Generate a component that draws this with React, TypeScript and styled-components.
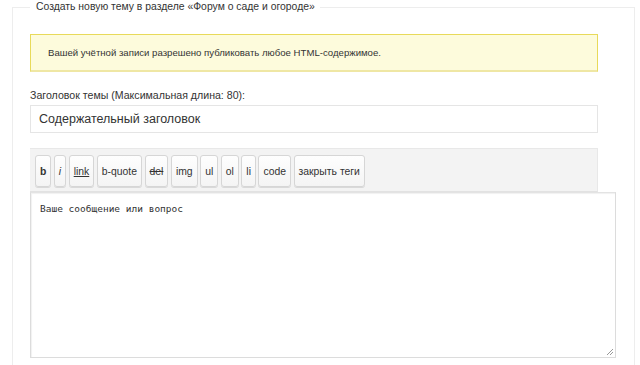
import React from "react";
import styled, { createGlobalStyle } from "styled-components";

const Global = createGlobalStyle`
  html, body { margin: 0; padding: 0; background: #fff; }
  body { font-family: "Liberation Sans", Arial, sans-serif; color: #333; }
  * { box-sizing: border-box; }
`;

const Page = styled.div`
  padding: 0 0 0 12px;
`;

const Fieldset = styled.fieldset`
  width: 604px;
  margin: 0;
  padding: 8px 18px 20px 17px;
  border: 1px solid #ededed;
  border-bottom: none;
`;

const Legend = styled.legend`
  padding: 0 5px 0 6px;
  font-size: 10.4px;
  line-height: 14px;
  color: #333;
`;

const Notice = styled.div`
  width: 568px;
  height: 38px;
  display: flex;
  align-items: center;
  padding: 0 0 0 17px;
  margin-top: 12px;
  background: #fdfbdc;
  border: 1px solid #e8da5a;
  border-bottom: 2px solid #efe7a4;
  font-size: 9.6px;
  color: #333;
`;

const Label = styled.label`
  display: block;
  margin-top: 17px;
  font-size: 10.6px;
  line-height: 12px;
  color: #333;
`;

const TitleInput = styled.div`
  width: 568px;
  height: 28px;
  margin-top: 4px;
  display: flex;
  align-items: center;
  padding: 0 8px;
  border: 1px solid #e5e5e5;
  font-size: 12.5px;
  color: #333;
`;

const Toolbar = styled.div`
  width: 568px;
  height: 44px;
  margin-top: 15px;
  display: flex;
  align-items: flex-start;
  gap: 2.5px;
  padding: 6px 0 0 5px;
  background: #f3f3f3;
  border: 1px solid #e8e8e8;
  border-left: none;
  border-bottom-color: #e2e2e2;
`;

const TagButton = styled.button<{ $kind?: "b" | "i" | "link" | "del" }>`
  height: 32px;
  padding: 0 4px;
  margin: 0;
  border: 1px solid #d6d6d6;
  border-radius: 3px;
  background: linear-gradient(#fefefe, #f4f4f4);
  box-shadow: 0 1px 0 #d9d9d9;
  font-family: "Liberation Sans", Arial, sans-serif;
  font-size: 10.4px;
  color: #333;
  font-weight: ${(p) => (p.$kind === "b" ? "bold" : "normal")};
  font-style: ${(p) => (p.$kind === "i" ? "italic" : "normal")};
  text-decoration: ${(p) =>
    p.$kind === "link" ? "underline" : p.$kind === "del" ? "line-through" : "none"};
  cursor: pointer;
`;

const TextAreaBox = styled.div`
  position: relative;
  width: 586px;
  height: 166px;
  padding: 10px 9px;
  border: 1px solid #dcdcdc;
  border-top-color: #e3e3e3;
  box-shadow: inset 1px 1px 1px rgba(0, 0, 0, 0.06);
  font-family: "DejaVu Sans Mono", "Liberation Mono", monospace;
  font-size: 9.5px;
  line-height: 12px;
  color: #333;
  background: #fff;
`;

const Grip = styled.svg`
  position: absolute;
  right: 1px;
  bottom: 1px;
`;

const buttons: { label: string; kind?: "b" | "i" | "link" | "del" }[] = [
  { label: "b", kind: "b" },
  { label: "i", kind: "i" },
  { label: "link", kind: "link" },
  { label: "b-quote" },
  { label: "del", kind: "del" },
  { label: "img" },
  { label: "ul" },
  { label: "ol" },
  { label: "li" },
  { label: "code" },
  { label: "закрыть теги" },
];

export default function App() {
  return (
    <>
      <Global />
      <Page>
        <Fieldset>
          <Legend>Создать новую тему в разделе «Форум о саде и огороде»</Legend>
          <Notice>Вашей учётной записи разрешено публиковать любое HTML-содержимое.</Notice>
          <Label>Заголовок темы (Максимальная длина: 80):</Label>
          <TitleInput>Содержательный заголовок</TitleInput>
          <Toolbar>
            {buttons.map((b) => (
              <TagButton key={b.label} $kind={b.kind}>
                {b.label}
              </TagButton>
            ))}
          </Toolbar>
          <TextAreaBox>
            Ваше сообщение или вопрос
            <Grip width="8" height="8" viewBox="0 0 8 8">
              <path d="M7 1 L1 7 M7 4 L4 7" stroke="#999" strokeWidth="1" />
            </Grip>
          </TextAreaBox>
        </Fieldset>
      </Page>
    </>
  );
}
